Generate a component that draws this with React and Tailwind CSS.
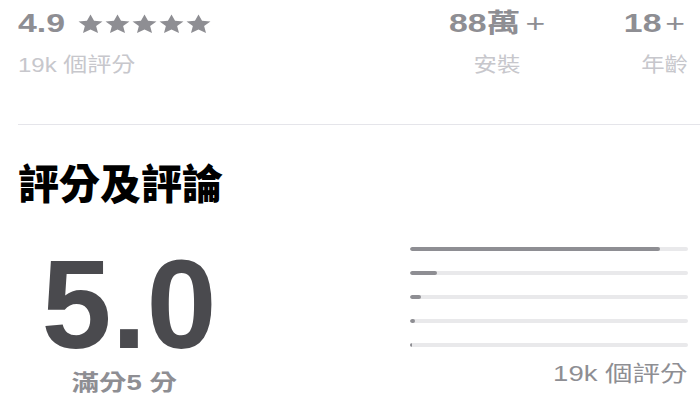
import React from "react";

const Star = () => (
  <svg width="25" height="19" viewBox="0 0 24 22" preserveAspectRatio="none" className="block">
    <path d="M12 0.5l3.4 7.3 8.1 0.8-6.1 5.4 1.8 8L12 18l-7.2 4 1.8-8L0.5 8.6l8.1-0.8z" fill="#8e8e93" />
  </svg>
);

const bars = [250, 27, 11, 5, 2];

export default function App() {
  return (
    <div className="w-[700px] h-[405px] overflow-hidden bg-white pl-[18px] pr-[12px] font-['Liberation_Sans','Noto_Sans_CJK_TC',sans-serif]">
      {/* top stats */}
      <div className="flex items-start pt-[8px]">
        <div className="flex flex-col">
          <div className="flex items-center">
            <span className="inline-block origin-left scale-x-[1.3] text-[26px] leading-[30px] font-bold text-[#8e8e93]">4.9</span>
            <div className="flex ml-[24px] gap-[2px] mt-[1px]">
              <Star />
              <Star />
              <Star />
              <Star />
              <Star />
            </div>
          </div>
          <div className="mt-[15px] inline-block origin-left scale-x-[1.2] text-[20px] leading-[24px] text-[#c7c7cc]">19k 個評分</div>
        </div>
        <div className="ml-auto flex items-start">
          <div className="w-[120px] flex flex-col items-center">
            <span className="inline-block origin-center scale-x-[1.3] text-[26px] leading-[30px] font-bold text-[#8e8e93]">
              88萬<span className="font-normal ml-[4px]">+</span>
            </span>
            <span className="mt-[15px] inline-block origin-center scale-x-[1.17] text-[20px] leading-[24px] text-[#c7c7cc]">安裝</span>
          </div>
          <div className="w-[131px] flex flex-col items-end">
            <span className="inline-block origin-right scale-x-[1.3] text-[26px] leading-[30px] font-bold text-[#8e8e93] mr-[3px]">
              18<span className="font-normal ml-[3px]">+</span>
            </span>
            <span className="mt-[15px] inline-block origin-right scale-x-[1.17] text-[20px] leading-[24px] text-[#c7c7cc]">年齡</span>
          </div>
        </div>
      </div>

      {/* divider */}
      <div className="mt-[47px] h-px bg-[#e5e5ea] mr-[-12px]" />

      {/* heading */}
      <h2 className="mt-[38px] text-[41px] leading-[44px] font-black text-black">評分及評論</h2>

      {/* rating section */}
      <div className="flex items-start mt-[35px]">
        <div className="w-[222px] flex flex-col items-center">
          <span className="text-[126px] leading-[126px] font-bold text-[#4a4a4e]">5.0</span>
          <span className="mt-[2px] mr-[10px] inline-block origin-center scale-x-[1.25] text-[22px] leading-[26px] font-bold text-[#8e8e93]">滿分5 分</span>
        </div>
        <div className="ml-[170px] w-[278px] flex flex-col pt-[5px]">
          <div className="flex flex-col gap-[20px]">
            {bars.map((w, i) => (
              <div key={i} className="h-[4px] rounded-full bg-[#e9e9eb] overflow-hidden">
                <div className="h-full rounded-full bg-[#8e8e93]" style={{ width: w }} />
              </div>
            ))}
          </div>
          <div className="mt-[14px] self-end inline-block origin-right scale-x-[1.25] text-[22px] leading-[26px] text-[#8e8e93]">19k 個評分</div>
        </div>
      </div>
    </div>
  );
}
